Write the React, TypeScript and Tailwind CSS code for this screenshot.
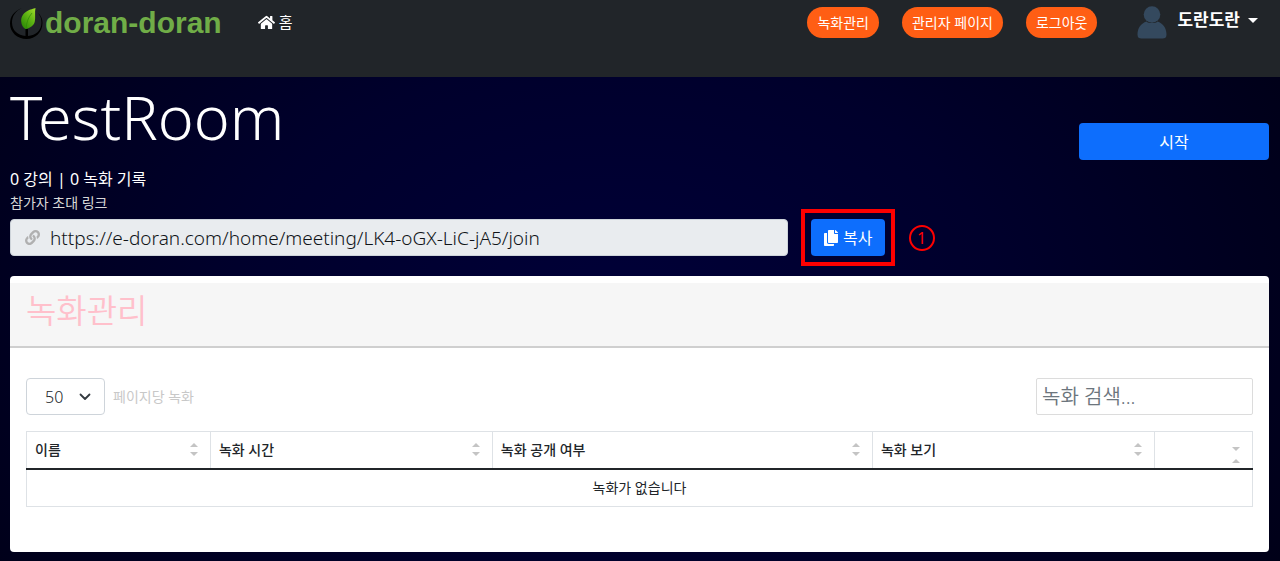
import { FaHome, FaLink, FaCopy } from "react-icons/fa";
import { clsx } from "clsx";

const Logo = () => {
    return (
        <a href="#" className="flex items-center" aria-label="doran-doran">
            <svg width="34" height="34" viewBox="0 0 34 34" aria-hidden="true">
                <defs>
                    <linearGradient id="leaf" x1="1" y1="0" x2="0.2" y2="1">
                        <stop offset="0" stopColor="#a4e02c" />
                        <stop offset="0.5" stopColor="#5fb414" />
                        <stop offset="1" stopColor="#2c8a06" />
                    </linearGradient>
                </defs>
                <path fill="#000" d="M12 2C4 5 0 10.500 0 17.500C0 26.500 7.500 33 16.500 33C25.500 33 32.500 26 32.500 17C32.500 13 31 9.500 28 7C30.500 10 31.500 13 31.500 16.500C31.500 24 26 29.500 18 30V23H15.500V30C8 29.500 2 24.500 2 16.500C2 10 5.500 5 12 2Z" />
                <path fill="url(#leaf)" d="M25.500 2C24 2.800 20 3.200 16.500 5.500C12.500 8 11 11.500 11.200 15.500C11.400 19 13 21.500 15.500 23C19.500 22.500 23.500 20 24.700 16C25.800 12 24.500 6 25.500 2Z" />
                <path fill="none" stroke="#2c8a06" strokeWidth="0.700" d="M22 7C18.500 11 16.500 16 16 23" />
            </svg>
            <span className="ml-px text-[30px] leading-9 font-bold text-[#70ad47]">doran-doran</span>
        </a>
    )
}

const Avatar = () => {
    return (
        <svg width="30" height="33" viewBox="0 0 30 33" fill="#34495e" aria-hidden="true">
            <circle cx="15" cy="8.500" r="8.300" />
            <path d="M9.500 15.500C11 17.500 19 17.500 20.500 15.500C26 17.500 29.500 22 29.500 28.500C29.500 31.500 28 32.500 25.500 32.500H4.500C2 32.500 0.500 31.500 0.500 28.500C0.500 22 4 17.500 9.500 15.500Z" />
        </svg>
    )
}

const menu = ["녹화관리", "관리자 페이지", "로그아웃"];

const Header = () => {
    return (
        <header className="flex h-[77px] items-start bg-[#212529] pr-[22px] pl-2.5 text-white">
            <div className="flex h-[46px] items-center font-['Liberation_Sans',sans-serif]">
                <Logo />
            </div>
            <a href="#" className="ml-9 flex h-11 items-center gap-1 text-[15px]">
                <FaHome size={17} />
                홈
            </a>
            <nav className="ml-auto flex h-11 items-center gap-[23px]">
                {menu.map((label) => (
                    <button key={label} type="button" className="h-[31px] rounded-full bg-[#ff5e14] px-2.5 text-[14px]">
                        {label}
                    </button>
                ))}
            </nav>
            <button type="button" className="ml-10 flex h-11 items-center">
                <Avatar />
                <span className="ml-2.5 pb-1 text-[17px] leading-6 font-bold">도란도란</span>
                <svg className="mb-1 ml-2" width="10" height="5" viewBox="0 0 10 5" fill="#fff" aria-hidden="true">
                    <path d="M0 0H10L5 5Z" />
                </svg>
            </button>
        </header>
    )
}

const SortIcon = ({ swapped = false }: { swapped?: boolean }) => {
    return (
        <svg className={clsx("shrink-0", swapped && "mt-2.5")} width="8" height={swapped ? 16 : 13} viewBox={swapped ? "0 0 8 16" : "0 0 8 13"} fill="#c4c4c4" aria-hidden="true">
            {swapped ? <path d="M0 0H8L4 4ZM0 16H8L4 12Z" /> : <path d="M0 4H8L4 0ZM0 9H8L4 13Z" />}
        </svg>
    )
}

const columns = [
    { label: "이름", width: "w-[15%]" },
    { label: "녹화 시간", width: "w-[23%]" },
    { label: "녹화 공개 여부", width: "w-[31%]" },
    { label: "녹화 보기", width: "w-[23%]" },
    { label: "", width: "w-[8%]" },
];

const Recordings = () => {
    return (
        <section className="mt-5 rounded bg-white pt-[7px]">
            <div className="border-b-2 border-[#cfcfcf] bg-[#f6f6f6] px-4 pt-1 pb-[11px]">
                <h2 className="text-[33px] leading-12 font-[350] text-[#ffc0cb]">녹화관리</h2>
            </div>
            <div className="px-4 pt-[30px] pb-[45px]">
                <div className="flex items-center">
                    <div className="relative">
                        <select id="per-page" className="h-[37px] w-[79px] appearance-none rounded border border-[#ced4da] bg-white pl-[18px] text-base font-light text-[#212529]">
                            <option>50</option>
                            <option>100</option>
                        </select>
                        <svg className="pointer-events-none absolute top-3.5 right-3.5" width="12" height="10" viewBox="0 0 12 10" fill="none" stroke="#343a40" strokeWidth="1.800" strokeLinecap="round" strokeLinejoin="round" aria-hidden="true">
                            <path d="M1.500 2.500L6 7L10.500 2.500" />
                        </svg>
                    </div>
                    <label htmlFor="per-page" className="ml-2 text-[14px] text-[#c8c8c8]">페이지당 녹화</label>
                    <input type="text" aria-label="녹화 검색" placeholder="녹화 검색..."
                        className="ml-auto h-[37px] w-[217px] rounded-xs border border-[#dcdcdc] bg-white px-[5px] text-[20px] font-[350] text-[#212529] placeholder:text-[#6c757d]" />
                </div>
                <table className="mt-4 w-full table-fixed border-collapse text-[14px] text-[#212529]">
                    <thead>
                        <tr className="border-b-2 border-[#212529]">
                            {columns.map((col) => (
                                <th key={col.label} className={clsx("h-[37px] border-x border-t border-x-[#dee2e6] border-t-[#dee2e6] p-0 pr-3 pl-2 text-left font-medium", col.width)}>
                                    <div className="flex items-center justify-between">
                                        <span>{col.label}</span>
                                        <SortIcon swapped={!col.label} />
                                    </div>
                                </th>
                            ))}
                        </tr>
                    </thead>
                    <tbody>
                        <tr>
                            <td colSpan={5} className="h-[38px] border-x border-b border-[#dee2e6] p-0 text-center">녹화가 없습니다</td>
                        </tr>
                    </tbody>
                </table>
            </div>
        </section>
    )
}

const App = () => {
    return (
        <div className="min-h-screen bg-[#000018] bg-[radial-gradient(ellipse_60%_90%_at_48%_55%,#000038,#00002c_50%,#000018)] font-['Noto_Sans','Noto_Sans_CJK_KR',sans-serif]">
            <Header />
            <main className="pr-[11px] pb-2 pl-2.5 text-white">
                <div className="flex items-start justify-between">
                    <div>
                        <h1 className="pb-1.5 text-[61px] leading-20 font-light">TestRoom</h1>
                        <p className="pt-1 text-base leading-6">0 강의 | 0 녹화 기록</p>
                        <label htmlFor="invite" className="block text-[14px] leading-6 text-[#d8d8d8]">참가자 초대 링크</label>
                    </div>
                    <button type="button" className="mt-[46px] h-[37px] w-[190px] rounded bg-[#0d6efd] text-base">시작</button>
                </div>
                <div className="mt-1 flex items-center">
                    <div className="flex h-[37px] w-[61.8%] items-center rounded border border-[#ced4da] bg-[#e9ecef] pl-3.5">
                        <FaLink size={15} color="#b0b0b0" className="shrink-0" />
                        <input id="invite" type="text" readOnly value="https://e-doran.com/home/meeting/LK4-oGX-LiC-jA5/join"
                            className="ml-2.5 min-w-0 flex-1 bg-transparent pt-0.5 text-[19px] font-light text-[#101418] outline-0" />
                    </div>
                    <div className="-my-2.5 ml-[13px] border-4 border-[#fe0000] p-1.5">
                        <button type="button" className="flex h-[37px] items-center gap-1 rounded bg-[#0d6efd] px-3 text-base">
                            <FaCopy size={16} />
                            복사
                        </button>
                    </div>
                    <span className="ml-3.5 flex size-[26px] items-center justify-center rounded-full border-2 border-[#fe0000] text-base text-[#fe0000]">1</span>
                </div>
                <Recordings />
            </main>
        </div>
    )
}

export default App;
